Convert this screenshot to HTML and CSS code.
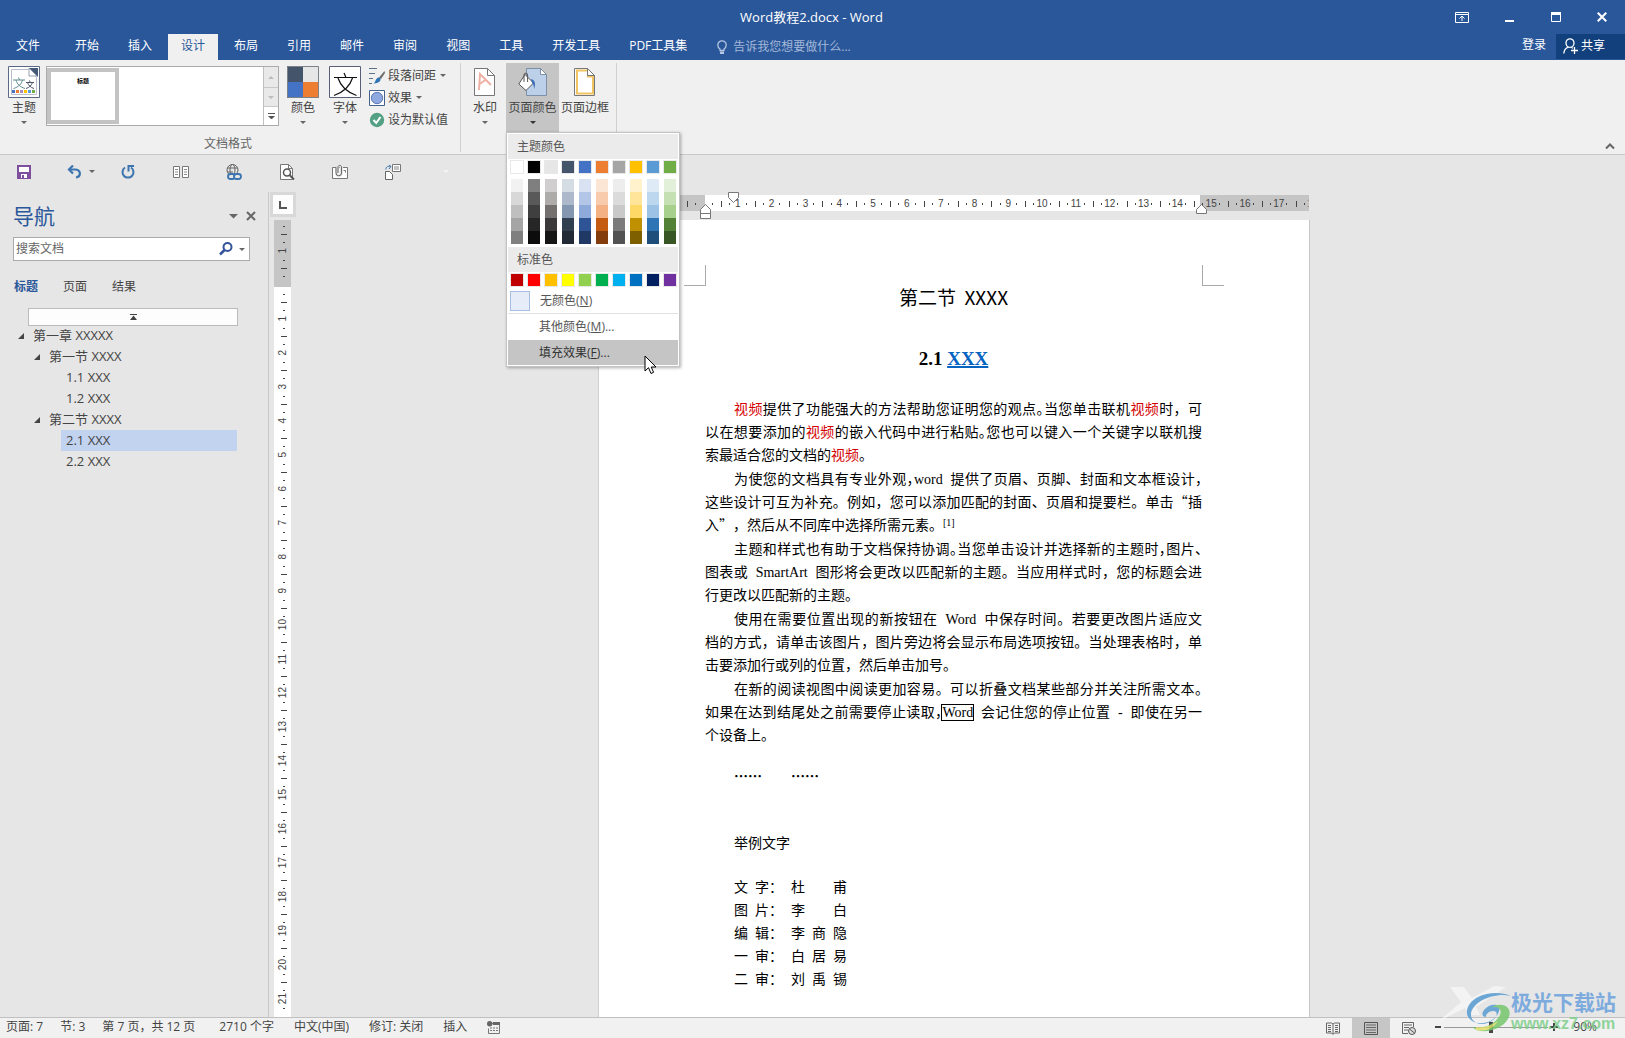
FILE: index.html
```html
<!DOCTYPE html>
<html lang="zh-CN">
<head>
<meta charset="utf-8">
<title>Word教程2.docx - Word</title>
<link rel="stylesheet" href="styles.css">
</head>
<body>
<header class="titlebar">
  <div class="caption">
    <span class="caption-text">Word教程2.docx - Word</span>
    <div class="window-buttons">
      <button aria-label="功能区显示选项"><svg width="14" height="12" viewBox="0 0 14 12"><path d="M.5 1.500h13v10H.5zM.5 3.500h13M7 10V5M4.500 7.500 7 5l2.500 2.500" fill="none" stroke="#fff"/></svg></button>
      <button aria-label="最小化"><svg width="10" height="12" viewBox="0 0 10 12"><path d="M0 9h9v2H0z" fill="#fff"/></svg></button>
      <button aria-label="最大化"><svg width="10" height="12" viewBox="0 0 10 12"><path d="M.5 1.500h9v9h-9z" fill="none" stroke="#fff"/><path d="M0 1h10v3H0z" fill="#fff"/></svg></button>
      <button aria-label="关闭"><svg width="10" height="12" viewBox="0 0 10 12"><path d="m.7 1.700 8.600 8.600m0-8.600L.7 10.300" stroke="#fff" stroke-width="2.200"/></svg></button>
    </div>
  </div>
  <nav class="tabs">
    <button class="tab tab-file">文件</button>
    <button class="tab">开始</button>
    <button class="tab">插入</button>
    <button class="tab active">设计</button>
    <button class="tab">布局</button>
    <button class="tab">引用</button>
    <button class="tab">邮件</button>
    <button class="tab">审阅</button>
    <button class="tab">视图</button>
    <button class="tab">工具</button>
    <button class="tab">开发工具</button>
    <button class="tab">PDF工具集</button>
    <label class="tellme">
      <svg width="10" height="15" viewBox="0 0 10 15"><path d="M3 10.500V9C1.500 8 .8 6.500.8 5a4.200 4.200 0 0 1 8.400 0c0 1.500-.7 3-2.200 4v1.500z" fill="none" stroke="#b4c6e1" stroke-width="1.300"/><path d="M3 11.500h4v2.500H3z" fill="#b4c6e1"/></svg>
      <input type="text" placeholder="告诉我您想要做什么..." aria-label="告诉我您想要做什么">
    </label>
    <a class="signin" href="#">登录</a>
    <button class="share"><svg width="15" height="16" viewBox="0 0 15 16"><path d="M.8 15.500C1 12 3 10 5.500 9.200M7 .8a4 4.300 0 1 1 0 8.600A4 4.300 0 1 1 7 .8zM8.500 9.400l1.500.8M11.500 9v7M8 12.500h7" fill="none" stroke="#fff" stroke-width="1.300"/></svg>共享</button>
  </nav>
</header>

<section class="ribbon" aria-label="设计">
  <div class="group">
    <div class="group-items">
      <button class="big"><svg width="32" height="32" viewBox="0 0 32 32"><path d="M.5.500h31v31H.5z" fill="#fff" stroke="#5a6a85"/><path d="M3.500 3.500h17l8 8v17h-25z" fill="#fff" stroke="#b9bfca"/><path d="M21 2h9v9z" fill="#445a78"/><path d="M21 2v8h8z" fill="#fff" stroke="#7c8aa0" stroke-width=".8"/><g fill="none" stroke="#5d8b8f" stroke-width="1"><path d="M5 14h12M10.500 11.500l1 2.500M14.500 14c-1 4-4 7-9 8.500M8 14c1 4 4 7 9 8.500" /><path d="M18 16.500h8M21.500 14.500l.7 2M24.500 16.500c-.8 2.500-3 5-6.500 6M19.500 16.500c.8 2.500 3 5 6.500 6" stroke="#4c566b"/></g><path d="M4 24h3v3H4z" fill="#4472c4"/><path d="M8 24h3v3H8z" fill="#ed7d31"/><path d="M12 24h3v3h-3z" fill="#a58fb8"/><path d="M16 24h3v3h-3z" fill="#ffc000"/><path d="M20 24h3v3h-3z" fill="#5b9bd5"/><path d="M24 24h3v3h-3z" fill="#70ad47"/></svg><span>主题</span><i class="arrow"></i></button>
      <div class="gallery">
        <button class="style-card">标题</button>
        <div class="gallery-scroll">
          <button disabled aria-label="上一行"><i class="arrow up faint"></i></button>
          <button disabled aria-label="下一行"><i class="arrow faint"></i></button>
          <button class="more" aria-label="其他"><i class="arrow more-arrow"></i></button>
        </div>
      </div>
      <button class="big color-set"><svg width="32" height="32" viewBox="0 0 32 32"><path d="M0 0h16v16H0z" fill="#44546a"/><path d="M16 0h16v16H16z" fill="#e7e6e6"/><path d="M0 16h16v16H0z" fill="#4472c4"/><path d="M16 16h16v16H16z" fill="#ed7d31"/><path d="M.5.500h31v31H.5z" fill="none" stroke="#7c8187"/></svg><span>颜色</span><i class="arrow"></i></button>
      <button class="big"><svg width="32" height="32" viewBox="0 0 32 32"><path d="M.5.500h31v31H.5z" fill="#fff" stroke="#5a5f78"/><path d="M5 11.500h23M15 7l2 4.500M23.500 12C21 20 15 26 5 29.500M9 12c2.500 8 9 14 18.500 17.500" fill="none" stroke="#111" stroke-width="1.200"/></svg><span>字体</span><i class="arrow"></i></button>
      <div class="small-list">
        <button class="small"><svg width="16" height="16" viewBox="0 0 16 16"><path d="M0 .5h8M0 5.500h6M0 10.500h4M0 15.500h3" stroke="#5b7288"/><path d="M15.500 3 10 9.500l2 1.500 4-6z" fill="#6d6d6d"/><path d="M4 15.500c3 0 2-6 6-6 3 1 2 6-6 6z" fill="#2e75b6"/></svg>段落间距<i class="arrow"></i></button>
        <button class="small"><svg width="16" height="16" viewBox="0 0 16 16"><path d="M.5.500h15v15H.5z" fill="#fff" stroke="#44618c"/><circle cx="8" cy="8" r="5.700" fill="#8fa9e0" stroke="#5b78b8"/></svg>效果<i class="arrow"></i></button>
        <button class="small"><svg width="16" height="16" viewBox="0 0 16 16"><circle cx="8" cy="8" r="7.200" fill="#54a085"/><path d="m4.500 8 2.700 3 4.300-6" fill="none" stroke="#fff" stroke-width="2"/></svg>设为默认值</button>
      </div>
    </div>
    <div class="group-name">文档格式</div>
  </div>
  <div class="group group-page">
    <div class="group-items">
      <button class="big watermark-btn"><svg width="22" height="32" viewBox="0 0 22 32"><path d="M.5 2.500h13l7 7v20H.5z" fill="#fff" stroke="#777"/><path d="M13.500 2.500v7h7" fill="none" stroke="#777"/><path d="M5 24 6 8l11 11M5.500 18l6-4" fill="none" stroke="#eeb0a4" stroke-width="2"/></svg><span>水印</span><i class="arrow"></i></button>
      <div class="page-color">
        <button class="big pressed" aria-expanded="true"><svg width="30" height="32" viewBox="0 0 30 32"><path d="M8.500 2.500h14l6 6v21h-20z" fill="#bdd0ea" stroke="#7f8fa6"/><path d="M22.500 2.500v6h6z" fill="#fff" stroke="#7f8fa6"/><path d="M7 8.500 15.500 17 8 24.500.8 18z" fill="#fff" stroke="#555"/><path d="M6 16V9a1.800 1.800 0 0 1 3.600 0v7" fill="none" stroke="#555"/><path d="M13 13c4 1 5 5 3 10 0-3-.5-5-2-6z" fill="#3c6eb4"/></svg><span>页面颜色</span><i class="arrow dark"></i></button>
        <div class="menu" role="menu">
          <h2>主题颜色</h2>
          <div class="swatches" id="theme-base"></div>
          <div class="swatches shades" id="theme-shades"></div>
          <h2>标准色</h2>
          <div class="swatches standard" id="standard"></div>
          <button class="menu-item" role="menuitem"><i class="no-color"></i>无颜色(<u>N</u>)</button>
          <button class="menu-item ruled" role="menuitem"><span>其他颜色(<u>M</u>)...</span></button>
          <button class="menu-item hover" role="menuitem"><span>填充效果(<u>F</u>)...</span></button>
          <svg class="pointer" width="13" height="20" viewBox="0 0 13 20"><path d="M1 1v15l3.500-3.300L7 18.500l2.600-1.200-2.400-5.300H12z" fill="#fff" stroke="#000"/></svg>
        </div>
      </div>
      <button class="big"><svg width="22" height="32" viewBox="0 0 22 32"><path d="M.5 2.500h13l7 7v20H.5z" fill="#fff" stroke="#777"/><path d="M3 4.500h11v6h5v17H3z" fill="none" stroke="#f0c363" stroke-width="2"/><path d="M13.500 2.500v7h7z" fill="#fff" stroke="#777"/></svg><span>页面边框</span></button>
    </div>
  </div>
  <button class="collapse" aria-label="折叠功能区"><svg width="10" height="7" viewBox="0 0 10 7"><path d="m1 5.500 4-4 4 4" fill="none" stroke="#666" stroke-width="2"/></svg></button>
</section>

<div class="qat">
  <button class="save" aria-label="保存"><svg width="14" height="14" viewBox="0 0 14 14"><path d="M1 1h12v12H1z" fill="#fff" stroke="#7d4f9e" stroke-width="2"/><path d="M1 7h12v6H1z" fill="#7d4f9e"/><path d="M4 9h6v4H4z" fill="#fff"/><path d="M5 10h2v3H5z" fill="#7d4f9e"/></svg></button>
  <button class="undo" aria-label="撤消"><svg width="14" height="14" viewBox="0 0 14 14"><path d="M2 4.500h6c6 0 6.500 7 1 8" fill="none" stroke="#3b74ae" stroke-width="2.200"/><path d="M6 .5 2 4.500l4 4" fill="none" stroke="#3b74ae" stroke-width="2.200"/></svg><i class="arrow"></i></button>
  <button aria-label="重复"><svg width="14" height="14" viewBox="0 0 14 14"><path d="M4 2.500a5.500 5.500 0 1 0 6 0" fill="none" stroke="#3b74ae" stroke-width="2"/><path d="M13 1H7.500v5.500" fill="none" stroke="#3b74ae" stroke-width="2"/></svg></button>
  <button aria-label="阅读"><svg width="16" height="12" viewBox="0 0 16 12"><path d="M.5.500h6v11h-6zM9.500.500h6v11h-6z" fill="#fff" stroke="#777"/><path d="M2 3.500h3M2 6h3M2 8.500h3M11 3.500h3M11 6h3M11 8.500h3" stroke="#888"/></svg></button>
  <button aria-label="超链接"><svg width="16" height="16" viewBox="0 0 16 16"><g fill="none" stroke="#666"><circle cx="6.500" cy="6" r="5.500"/><ellipse cx="6.500" cy="6" rx="2.500" ry="5.500"/><path d="M1 4h11M1 8h6"/></g><g fill="#e6e6e6" stroke="#3b74ae" stroke-width="1.800"><rect x="2" y="10" width="7" height="5" rx="2.500"/><rect x="8" y="10" width="7" height="5" rx="2.500"/></g></svg></button>
  <button aria-label="打印预览"><svg width="15" height="16" viewBox="0 0 15 16"><path d="M.5.500h8l4 4v11H.5z" fill="#fff" stroke="#777"/><path d="M8.500.500v4h4" fill="none" stroke="#777"/><circle cx="7" cy="8.500" r="3.500" fill="#fff" stroke="#555" stroke-width="1.500"/><path d="m9.500 11 4.500 4.500" stroke="#555" stroke-width="2"/></svg></button>
  <button aria-label="附件"><svg width="16" height="16" viewBox="0 0 16 16"><path d="M.5 3.500h15v11H.5z" fill="#fff" stroke="#777"/><path d="M11.500 6.500h2v2" fill="none" stroke="#777"/><path d="M4.500 4v5a2.500 2.500 0 0 0 5 0V3a1.800 1.800 0 0 0-3.600 0v6" fill="none" stroke="#e6e6e6" stroke-width="3"/><path d="M4 4v5a2.500 2.500 0 0 0 5.500 0V2.500a2 2 0 0 0-3.500 0V9" fill="none" stroke="#666"/></svg></button>
  <button aria-label="切换窗口"><svg width="16" height="16" viewBox="0 0 16 16"><path d="M7.500.500h8v7h-8z" fill="#fff" stroke="#777"/><path d="M9 3h5M9 5h5" stroke="#888"/><path d="M.5 7.500h4l3 3v5h-7z" fill="#fff" stroke="#666"/><path d="M.8 5.500C1 2.500 3 2 5.500 2.500M4 1l2 1.500L4 5" fill="none" stroke="#3b74ae"/></svg></button>
  <button aria-label="自定义快速访问工具栏"><i class="arrow pale"></i></button>
</div>

<main class="workspace">
  <aside class="navpane">
    <div class="nav-head">
      <h1>导航</h1>
      <button aria-label="任务窗格选项"><svg width="9" height="10" viewBox="0 0 9 10"><path d="M0 3h9L4.500 7.500z" fill="#666"/></svg></button>
      <button aria-label="关闭窗格"><svg width="10" height="10" viewBox="0 0 10 10"><path d="m1 1 8 8m0-8L1 9" stroke="#666" stroke-width="2"/></svg></button>
    </div>
    <div class="search">
      <input type="text" placeholder="搜索文档" aria-label="搜索文档">
      <svg width="14" height="14" viewBox="0 0 14 14"><circle cx="8.500" cy="5" r="4" fill="none" stroke="#35539b" stroke-width="2"/><path d="M5.500 8 1 12.500" stroke="#35539b" stroke-width="2.500"/></svg>
      <i class="arrow"></i>
    </div>
    <div class="nav-tabs">
      <button class="current">标题</button><button>页面</button><button>结果</button>
    </div>
    <button class="jump" aria-label="跳转到开头"><svg width="7" height="6" viewBox="0 0 7 6"><path d="M0 0h7v1H0zM3.500 1.500 7 6H0z" fill="#444"/></svg></button>
    <ul class="tree">
      <li class="l1"><i class="open"></i>第一章 XXXXX</li>
      <li class="l2"><i class="open"></i>第一节 XXXX</li>
      <li class="l3">1.1 XXX</li>
      <li class="l3">1.2 XXX</li>
      <li class="l2"><i class="open"></i>第二节 XXXX</li>
      <li class="l3 selected">2.1 XXX</li>
      <li class="l3">2.2 XXX</li>
    </ul>
  </aside>

  <div class="vside">
    <button class="tab-stop" aria-label="左对齐制表符"><svg width="8" height="8" viewBox="0 0 8 8"><path d="M1 0v7h7" fill="none" stroke="#555" stroke-width="2"/></svg></button>
    <div class="vruler"><div class="vticks" id="vticks"></div></div>
  </div>

  <div class="canvas">
    <div class="hruler">
      <div class="hticks" id="hticks"></div>
      <svg class="marker first" width="11" height="11" viewBox="0 0 11 11"><path d="M.5.500h10v5l-5 5-5-5z" fill="#fff" stroke="#777"/></svg>
      <svg class="marker left" width="11" height="15" viewBox="0 0 11 15"><path d="M.5 5.500l5-5 5 5v9H.5zM.5 9.500h10" fill="#fff" stroke="#777"/></svg>
      <svg class="marker right" width="11" height="10" viewBox="0 0 11 10"><path d="M.5 5.500l5-5 5 5v4H.5z" fill="#fff" stroke="#777"/></svg>
    </div>
    <article class="page">
      <div class="crops"><i class="crop-left"></i><i class="crop-right"></i></div>
      <div class="text">
        <h1>第二节&nbsp; XXXX</h1>
        <h2>2.1 <a href="#">XXX</a></h2>
        <p><span class="row first-line"><em>视频</em>提供了功能强大的方法帮助您证明您的观点<b>。</b>当您单击联机<em>视频</em>时，可</span>
        <span class="row">以在想要添加的<em>视频</em>的嵌入代码中进行粘贴<b>。</b>您也可以键入一个关键字以联机搜</span>
        <span class="row end">索最适合您的文档的<em>视频</em>。</span></p>
        <p><span class="row first-line">为使您的文档具有专业外观<b>，</b>word&nbsp; 提供了页眉、页脚、封面和文本框设计<b>，</b></span>
        <span class="row">这些设计可互为补充。例如，您可以添加匹配的封面、页眉和提要栏。单击<q>“</q>插</span>
        <span class="row end">入<q>”</q>，然后从不同库中选择所需元素。<sup>[1]</sup></span></p>
        <p><span class="row first-line">主题和样式也有助于文档保持协调<b>。</b>当您单击设计并选择新的主题时<b>，</b>图片<b>、</b></span>
        <span class="row">图表或&nbsp; SmartArt&nbsp; 图形将会更改以匹配新的主题。当应用样式时，您的标题会进</span>
        <span class="row end">行更改以匹配新的主题。</span></p>
        <p><span class="row first-line">使用在需要位置出现的新按钮在&nbsp; Word&nbsp; 中保存时间。若要更改图片适应文</span>
        <span class="row">档的方式，请单击该图片，图片旁边将会显示布局选项按钮。当处理表格时，单</span>
        <span class="row end">击要添加行或列的位置，然后单击加号。</span></p>
        <p><span class="row first-line">在新的阅读视图中阅读更加容易。可以折叠文档某些部分并关注所需文本<b>。</b></span>
        <span class="row">如果在达到结尾处之前需要停止读取<b>，</b><span class="boxed">Word</span>&nbsp; 会记住您的停止位置&nbsp; -&nbsp; 即使在另一</span>
        <span class="row end">个设备上。</span></p>
        <p class="dots"><span>……</span><span>……</span></p>
        <p class="sample">举例文字</p>
        <dl class="credits">
          <dt>文  字：</dt><dd>杜        甫</dd>
          <dt>图  片：</dt><dd>李        白</dd>
          <dt>编  辑：</dt><dd>李  商  隐</dd>
          <dt>一  审：</dt><dd>白  居  易</dd>
          <dt>二  审：</dt><dd>刘  禹  锡</dd>
        </dl>
      </div>
    </article>
  </div>
</main>

<footer class="status">
  <span class="s-page">页面: 7</span>
  <span class="s-section">节: 3</span>
  <span class="s-count">第 7 页，共 12 页</span>
  <span>2710 个字</span>
  <span>中文(中国)</span>
  <span>修订: 关闭</span>
  <span>插入</span>
  <svg width="13" height="13" viewBox="0 0 13 13"><path d="M3.500 2.500h9v10h-11v-5" fill="none" stroke="#777"/><path d="M6 1h7v3H6z" fill="#666"/><circle cx="2.700" cy="2.700" r="2.700" fill="#666"/><path d="M3 7h8M3 9.500h8" stroke="#777" stroke-dasharray="2 1"/></svg>
  <div class="views">
    <button aria-label="阅读视图"><svg width="14" height="13" viewBox="0 0 14 13"><path d="M.5 1h5L7 2l1.500-1h5v10h-5L7 12.500 5.500 11h-5zM7 2v10" fill="none" stroke="#666"/><path d="M2 3.500h3M2 5.500h3M2 7.500h3M2 9.500h3M9 3.500h3M9 5.500h3M9 7.500h3M9 9.500h3" stroke="#666"/></svg></button>
    <button class="on" aria-label="页面视图"><svg width="14" height="13" viewBox="0 0 14 13"><path d="M.5.500h13v12H.5z" fill="none" stroke="#555"/><path d="M2 3h10M2 5.500h10M2 8h10M2 10.500h10" stroke="#666"/></svg></button>
    <button aria-label="Web 版式视图"><svg width="14" height="13" viewBox="0 0 14 13"><path d="M6 11.500H.5V.500h11V5" fill="none" stroke="#666"/><path d="M2 3h8M2 5.500h5M2 8h4" stroke="#666"/><circle cx="10" cy="9" r="3.500" fill="#ddd" stroke="#555"/><path d="m7.500 7 5 4" stroke="#555"/></svg></button>
  </div>
  <div class="zoom-bar">
    <button aria-label="缩小"><svg width="8" height="8" viewBox="0 0 8 8"><path d="M1 3h6v2H1z" fill="#444"/></svg></button>
    <input class="zoom" type="range" min="10" max="190" value="90" aria-label="显示比例">
    <button aria-label="放大"><svg width="8" height="8" viewBox="0 0 8 8"><path d="M0 3h8v2H0zM3 0h2v8H3z" fill="#444"/></svg></button>
  </div>
  <span class="percent">90%</span>
</footer>

<div class="sitemark">
  <svg width="76" height="52" viewBox="0 0 76 52"><path d="M12 5h14l8 11L56 4l12 1-30 20 4 8H30l-3-7L0 40l23-20z" fill="#fff" opacity=".65"/><path d="M73 14C56 10 33 20 33 33c0 8 12 13 22 5 5-4 5-9 0-9-5 0-8 5-7 6-4 0-5-4-1-8 5-6 17-6 14 2-2 8-13 15-25 11-11-5-9-18 4-25 9-4 21-6 33-1z" fill="#569cd3"/><path d="M54 25c9-1 11 5 6 11-7 9-18 11-26 9 8 8 29 4 36-8 6-11-5-18-16-12z" fill="#76c66d"/><path d="M38 45c8 1 15-1 22-6-5 8-13 11-22 9z" fill="#e1df68"/></svg>
  <div class="sitemark-text"><span class="site-name">极光下载站</span><span class="site-url">www.xz7.com</span></div>
</div>
<script src="script.js"></script>
</body>
</html>
```
FILE: styles.css
```css
* { box-sizing: border-box; }

body {
  margin: 0;
  height: 100vh;
  display: flex;
  flex-direction: column;
  overflow: hidden;
  background: #e6e6e6;
  color: #444;
  font: 12px/16px "Open Sans", "Noto Sans CJK SC", sans-serif;
}

button, input {
  font: inherit;
  color: inherit;
  background: none;
  border: 0;
  padding: 0;
  margin: 0;
  outline: 0;
}

svg { display: block; flex: none; }
i { font-style: normal; }

.arrow {
  width: 0;
  height: 0;
  border: 3px solid transparent;
  border-top-color: #666;
  border-bottom: 0;
}
.arrow.up { border-top: 0; border-bottom: 3px solid #bbb; }
.arrow.faint { border-top-color: #bbb; }
.arrow.dark { border-top-color: #333; }
.arrow.pale { border-top-color: #f4f4f4; }

/* Title bar and tabs */
.titlebar { background: #2a579a; color: #fff; flex: none; }
.caption { height: 34px; display: grid; grid-template-columns: 1fr auto 1fr; align-items: center; padding-right: 2px; }
.caption-text { grid-column: 2; font-size: 13px; }
.window-buttons { display: flex; justify-content: flex-end; gap: 36px; padding-right: 16px; }
.tabs { display: flex; gap: 3px; height: 26px; padding-left: 3px; }
.tab { padding: 0 13px 3px; white-space: nowrap; }
.tab-file { margin-right: 6px; }
.tab.active { background: #f0f0f0; color: #2a579a; }
.tellme { display: flex; align-items: center; gap: 6px; margin-left: 14px; }
.tellme input { width: 140px; }
.tellme input::placeholder { color: #a3b8d8; opacity: 1; }
.signin { margin-left: auto; margin-right: 7px; padding-top: 3px; color: #fff; text-decoration: none; }
.share { display: flex; align-items: center; gap: 3px; width: 69px; height: 25px; padding: 0 0 2px 7px; background: #12407c; }

/* Ribbon */
.ribbon { display: flex; flex: none; height: 95px; padding-top: 3px; background: #f0f0f0; border-bottom: 1px solid #c9c9c9; }
.group { display: flex; flex-direction: column; padding: 0 12px 0 8px; margin-bottom: 2px; border-right: 1px solid #d0d0d0; }
.group-items { display: flex; align-items: flex-start; flex: 1; }
.group-name { text-align: center; color: #666; }
.big { display: flex; flex-direction: column; align-items: center; padding-top: 3px; white-space: nowrap; }
.big span { margin-top: 2px; }
.big .arrow { margin-top: 5px; }
.big + .big { margin-left: 10px; }
.gallery { display: flex; width: 233px; height: 60px; margin: 3px 8px 0 6px; background: #fff; border: 1px solid #ababab; }
.style-card { width: 72px; height: 56px; margin-top: 1px; border: 4px solid #c3c3c3; padding-bottom: 30px; font-size: 6px; line-height: 10px; font-weight: 700; color: #000; }
.gallery-scroll { margin-left: auto; width: 15px; display: grid; grid-template-rows: 21px 19px 18px; border-left: 1px solid #c0c0c0; }
.gallery-scroll button { display: grid; place-items: center; background: #e9e9e9; border-bottom: 1px solid #c8c8c8; }
.gallery-scroll .more { background: #fff; border-bottom: 0; }
.more-arrow { width: 7px; height: 7px; border: 0; background: linear-gradient(#555, #555) 0 0 / 7px 1px no-repeat; }
.more-arrow::after { content: ""; display: block; border: 3px solid transparent; border-top-color: #555; border-bottom: 0; margin-top: 3px; }
.small-list { display: flex; flex-direction: column; gap: 5px; margin: 4px 0 0 8px; }
.small { display: flex; align-items: center; gap: 3px; height: 17px; white-space: nowrap; }
.small .arrow { margin-left: 1px; }
.group-page { padding: 0 7px 0 12px; }
.watermark-btn { margin-right: 9px; }
.page-color { position: relative; margin-right: 2px; }
.pressed { width: 53px; height: 69px; background: #c5c5c5; }
.collapse { align-self: flex-end; margin: 0 10px 4px auto; }

/* Colour menu */
.menu {
  position: absolute;
  z-index: 5;
  top: 69px;
  left: 0;
  width: 174px;
  padding: 1px;
  background: #fff;
  border: 1px solid #c3c3c3;
  box-shadow: 1px 1px 3px rgba(0, 0, 0, .3);
  color: #555;
}
.menu h2 { margin: 0; height: 25px; padding-left: 9px; background: #ebebeb; font-size: 12px; line-height: 25px; font-weight: 400; }
.swatches { display: grid; grid-template-columns: repeat(10, 12px); column-gap: 5px; padding: 2px 3px 3px; }
.swatches button { height: 12px; outline: 1px solid #e8e8e8; }
.shades { padding: 3px 3px 3px; }
.shades button { height: 13px; outline: 0; }
.standard { padding-bottom: 2px; }
.menu-item { display: flex; align-items: center; width: 100%; height: 25px; text-align: left; }
.menu-item span { padding-left: 31px; }
.menu-item.ruled { height: 27px; border-top: 1px solid #e1e1e1; }
.menu-item.hover { background: #c5c5c5; color: #333; }
.no-color { width: 20px; height: 20px; margin: 0 10px 0 2px; background: #e6edf8; border: 1px solid #a6bee2; }
.pointer { position: absolute; right: 22px; bottom: -9px; }

/* Quick access toolbar */
.qat { display: flex; align-items: center; flex: none; height: 37px; padding: 0 0 4px 16px; }
.qat button { display: flex; align-items: center; justify-content: center; gap: 8px; width: 16px; margin-right: 37px; }
.qat .save { margin-right: 35px; }
.qat .undo { width: 28px; margin-right: 25px; }

/* Workspace */
.workspace { flex: 1; min-height: 0; display: grid; grid-template-columns: 269px 28px 1fr; overflow: hidden; }
.navpane { padding: 10px 18px 0 13px; border-right: 1px solid #c9c9c9; }
.nav-head { display: flex; align-items: center; gap: 8px; height: 30px; padding-bottom: 2px; margin-right: -6px; }
.nav-head h1 { margin: 0 auto 0 0; font-size: 21px; line-height: 30px; font-weight: 400; color: #2a579a; }
.search { display: flex; align-items: center; gap: 6px; height: 24px; margin-top: 5px; padding: 0 4px 0 2px; background: #fff; border: 1px solid #ababab; }
.search input { flex: 1; min-width: 0; }
.search input::placeholder { color: #666; opacity: 1; }
.nav-tabs { display: flex; gap: 25px; margin-top: 18px; padding-left: 1px; }
.nav-tabs .current { color: #2a579a; font-weight: 700; }
.jump { display: grid; place-items: center; width: 210px; height: 18px; margin: 13px 0 0 15px; background: #fdfdfd; border: 1px solid #bcbcbc; }
.tree { list-style: none; margin: -1px 13px 0 0; padding: 0; font-size: 13px; line-height: 21px; }
.tree li { display: flex; align-items: center; height: 21px; }
.tree .open { width: 0; height: 0; border: 3px solid #444; border-top-color: transparent; border-left-color: transparent; margin-right: 9px; }
.tree .l1 { padding-left: 5px; }
.tree .l2 { padding-left: 21px; }
.tree .l3 { margin-left: 48px; padding-left: 5px; }
.tree .selected { background: #c2d3f0; }

.vside { display: flex; flex-direction: column; min-height: 0; }
.tab-stop { display: grid; place-items: center; flex: none; width: 26px; height: 25px; margin: 0 0 3px 1px; background: #fdfdfd; border: 3px solid #d8d8d8; }
.vruler { flex: 1; min-height: 0; width: 17px; margin-left: 5px; overflow: hidden; background: linear-gradient(#c5c5c5 67px, #fff 67px); }
.vticks { margin-top: -20px; }
.vticks span {
  display: grid;
  place-items: center;
  height: 34px;
  background:
    linear-gradient(#444, #444) 7px 0 / 6px 1px no-repeat,
    linear-gradient(#444, #444) 9px 8px / 2px 1px no-repeat,
    linear-gradient(#444, #444) 9px 26px / 2px 1px no-repeat;
}
.vticks b { writing-mode: vertical-rl; transform: rotate(180deg); }
.vticks b, .hticks b { font: 10px/12px "Liberation Sans", sans-serif; color: #444; }

.canvas { display: flex; flex-direction: column; align-items: center; min-width: 0; padding: 3px 15px 0 0; }
.hruler { position: relative; flex: none; width: 710px; height: 16px; margin-bottom: 9px; background: linear-gradient(90deg, #c5c5c5 106px, #fff 106px 601px, #c5c5c5 601px); }
.hticks { display: grid; grid-template-columns: repeat(21, 1fr); width: 710px; height: 16px; clip-path: inset(0 21px 0 0); margin-left: 21px; margin-right: -21px; }
.hticks span {
  display: grid;
  place-items: center;
  padding-top: 2px;
  background:
    linear-gradient(#444, #444) 0 6px / 1px 6px no-repeat,
    linear-gradient(#444, #444) 25% 8px / 1px 2px no-repeat,
    linear-gradient(#444, #444) 75% 8px / 1px 2px no-repeat;
}
.marker { position: absolute; }
.marker.first { left: 129px; top: -3px; }
.marker.left { left: 101px; top: 9px; }
.marker.right { left: 597px; top: 9px; }

.page { flex: 1; width: 710px; background: #fff; box-shadow: 1px 0 0 #c6c6c6, -1px 0 0 #d0d0d0; color: #000; min-height: 0; }
.crops { display: flex; justify-content: space-between; padding: 45px 85px 0; }
.crops i { width: 22px; height: 21px; border-bottom: 1px solid #aaa; }
.crop-left { border-right: 1px solid #aaa; }
.crop-right { border-left: 1px solid #aaa; }
.text { width: 497px; margin: 0 auto; font: 14px/23px "Liberation Serif", "Noto Sans CJK SC", serif; text-spacing-trim: space-all; }
.text h1 { margin: 0; text-align: center; font: 400 19px/22px "Noto Sans CJK SC", sans-serif; }
.text h2 { margin: 37px 0 25px; text-align: center; font-size: 19px; line-height: 28px; }
.text h2 a { color: #0563c1; text-decoration-thickness: 2px; }
.text p { margin: 0 0 1px; }
.row { display: block; height: 23px; white-space: nowrap; text-align: justify; text-align-last: justify; }
.row.end { text-align-last: left; }
.first-line { padding-left: 29px; }
.row em { font-style: normal; color: #d40000; }
.row b { font-weight: 400; font-feature-settings: "halt"; }
.row q { quotes: none; font-family: "Noto Sans CJK SC", sans-serif; line-height: 1; }
.row sup { font-size: 10px; line-height: 10px; vertical-align: 4px; }
.boxed { outline: 1px solid #000; }
.text .dots { display: flex; gap: 29px; margin: 17px 0 45px 29px; font-family: "Noto Sans CJK SC", sans-serif; font-weight: 700; }
.text .sample { margin: 0 0 21px 29px; }
.credits { display: grid; grid-template-columns: 57px 1fr; margin: 0 0 0 29px; white-space: pre; }
.credits dd { margin: 0; }

/* Status bar */
.status { display: flex; align-items: center; flex: none; gap: 20px; height: 21px; padding: 0 28px 2px 6px; background: #f1f1f1; border-top: 1px solid #c0c0c0; white-space: nowrap; }
.s-page, .s-section { margin-right: -3px; }
.s-count { margin-right: 4px; }
.views { display: flex; align-self: flex-start; margin-left: auto; height: 20px; }
.views button { display: grid; place-items: center; width: 38px; }
.views .on { background: #c6c6c6; }
.zoom-bar { display: flex; align-items: center; gap: 2px; margin: 0 -5px 0 -14px; }
.zoom { appearance: none; width: 104px; height: 12px; background: linear-gradient(#999, #999) 0 6px / 100% 1px no-repeat; }
.zoom::-webkit-slider-thumb { appearance: none; width: 4px; height: 11px; background: #444; }

/* Site mark over the corner */
.sitemark { position: absolute; right: 9px; bottom: 4px; z-index: 9; display: flex; pointer-events: none; opacity: .85; }
.sitemark svg { margin: -4px -3px 0 0; }
.sitemark-text { display: flex; flex-direction: column; padding-top: 2px; }
.site-name { font: 700 21px/26px "Noto Sans CJK SC", sans-serif; color: #6ba1dc; }
.site-url { font: 700 16px/20px "Liberation Sans", sans-serif; color: #7fcf8b; }
```
FILE: script.js
```js
const base = ['#ffffff', '#000000', '#e7e6e6', '#44546a', '#4472c4', '#ed7d31', '#a5a5a5', '#ffc000', '#5b9bd5', '#70ad47'];
const shades = [
  ['#f2f2f2', '#7f7f7f', '#d0cece', '#d6dce4', '#d9e2f3', '#fbe5d5', '#ededed', '#fff2cc', '#deebf6', '#e2efd9'],
  ['#d8d8d8', '#595959', '#aeabab', '#adb9ca', '#b4c6e7', '#f7cbac', '#dbdbdb', '#fee599', '#bdd7ee', '#c5e0b3'],
  ['#bfbfbf', '#3f3f3f', '#757070', '#8496b0', '#8eaadb', '#f4b183', '#c9c9c9', '#ffd965', '#9cc3e5', '#a8d08d'],
  ['#a5a5a5', '#262626', '#3a3838', '#323f4f', '#2f5496', '#c55a11', '#7b7b7b', '#bf9000', '#2e75b5', '#538135'],
  ['#7f7f7f', '#0c0c0c', '#171616', '#222a35', '#1f3864', '#833c0b', '#525252', '#7f6000', '#1e4e79', '#375623']
];
const standard = ['#c00000', '#ff0000', '#ffc000', '#ffff00', '#92d050', '#00b050', '#00b0f0', '#0070c0', '#002060', '#7030a0'];

function fill(id, colors) {
  const box = document.getElementById(id);
  colors.forEach(color => {
    const swatch = document.createElement('button');
    swatch.style.background = color;
    swatch.setAttribute('aria-label', color);
    box.append(swatch);
  });
}
fill('theme-base', base);
fill('theme-shades', shades.flat());
fill('standard', standard);

function ticks(id, from, to) {
  const ruler = document.getElementById(id);
  for (let n = from; n <= to; n++) {
    const cell = document.createElement('span');
    if (n !== 0 && n !== from) {
      const number = document.createElement('b');
      number.textContent = Math.abs(n);
      cell.append(number);
    }
    ruler.append(cell);
  }
}
ticks('hticks', -2, 18);
ticks('vticks', -2, 21);
```
